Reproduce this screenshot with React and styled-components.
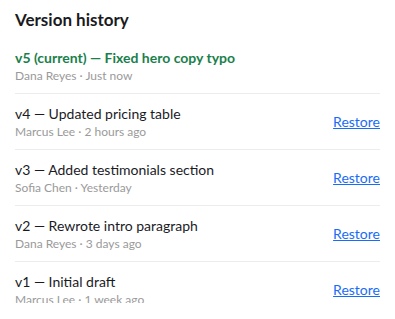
import styled, { createGlobalStyle } from 'styled-components';

const GlobalStyle = createGlobalStyle`
  body {
    margin: 0;
    background: #fff;
    font-family: "Segoe UI", Lato, "Liberation Sans", sans-serif;
  }
`;

const Panel = styled.div`
  height: 303px;
  box-sizing: border-box;
  padding: 8px 15px 0;
  overflow: hidden;
`;

const Heading = styled.h2`
  margin: 0 0 6px;
  font-size: 17px;
  line-height: 24px;
  font-weight: 700;
  color: #1b1b1f;
`;

const List = styled.ul`
  list-style: none;
  margin: 0;
  padding: 0;
`;

const Row = styled.li`
  display: flex;
  align-items: center;
  justify-content: space-between;
  padding: 10px 0;
  border-bottom: 1px solid #ececec;
`;

const Info = styled.div`
  display: flex;
  flex-direction: column;
`;

const Title = styled.div`
  font-size: 14px;
  line-height: 20px;
  color: ${p => (p.$current ? '#1b7f4c' : '#1b1b1f')};
  font-weight: ${p => (p.$current ? 700 : 400)};
`;

const Meta = styled.div`
  font-size: 12px;
  line-height: 15px;
  color: #9a9a9a;
`;

const RestoreLink = styled.a`
  font-size: 14px;
  color: #1a6cf5;
  text-decoration: underline;
  cursor: pointer;
`;

const versions = [
  { id: 5, label: 'v5 (current) — Fixed hero copy typo', author: 'Dana Reyes', when: 'Just now', current: true },
  { id: 4, label: 'v4 — Updated pricing table', author: 'Marcus Lee', when: '2 hours ago' },
  { id: 3, label: 'v3 — Added testimonials section', author: 'Sofia Chen', when: 'Yesterday' },
  { id: 2, label: 'v2 — Rewrote intro paragraph', author: 'Dana Reyes', when: '3 days ago' },
  { id: 1, label: 'v1 — Initial draft', author: 'Marcus Lee', when: '1 week ago' },
];

export default function App() {
  return (
    <>
      <GlobalStyle />
      <Panel>
        <Heading>Version history</Heading>
        <List>
          {versions.map(v => (
            <Row key={v.id}>
              <Info>
                <Title $current={v.current}>{v.label}</Title>
                <Meta>{v.author} · {v.when}</Meta>
              </Info>
              {!v.current && <RestoreLink href="#">Restore</RestoreLink>}
            </Row>
          ))}
        </List>
      </Panel>
    </>
  );
}
